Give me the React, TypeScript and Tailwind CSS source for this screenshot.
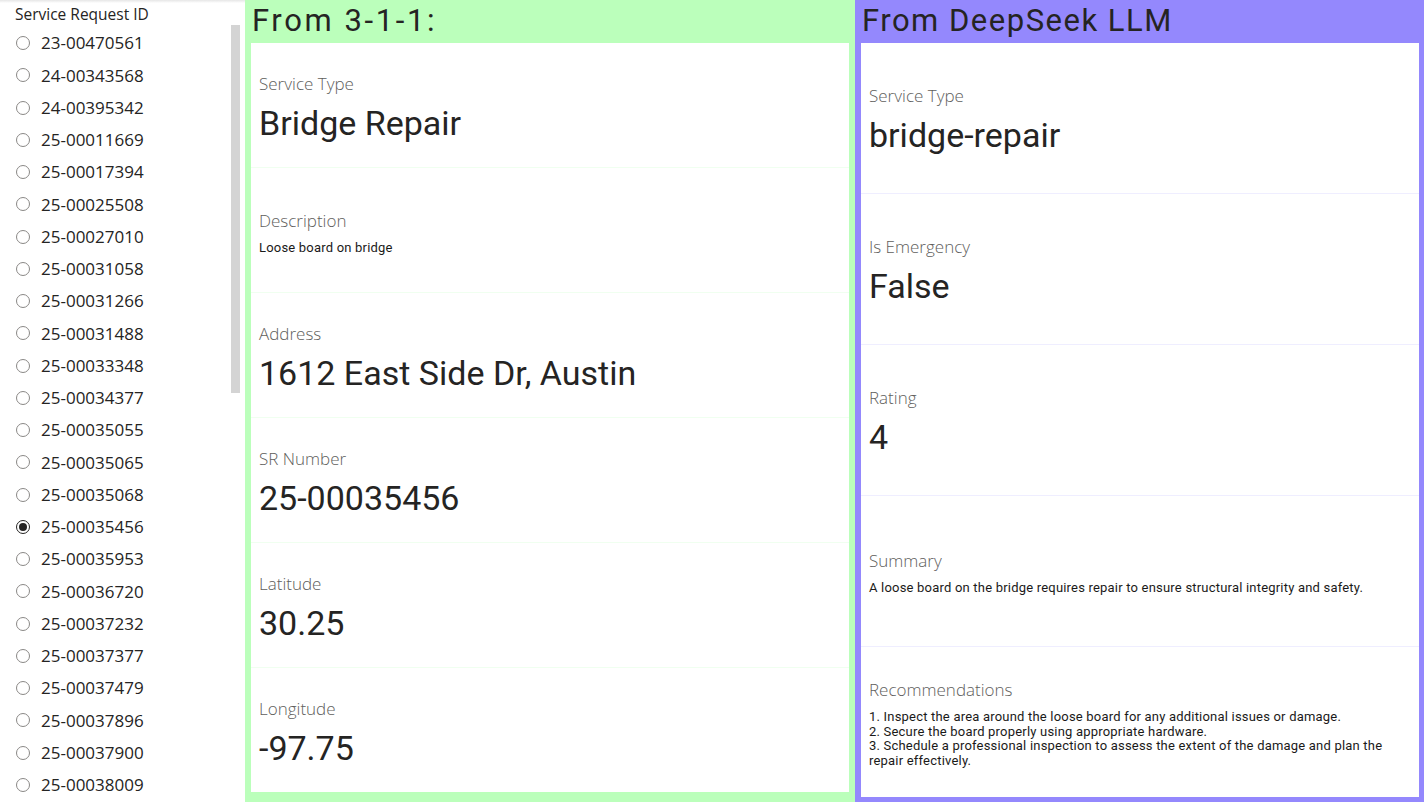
import React from 'react';

const ids = [
  '23-00470561', '24-00343568', '24-00395342', '25-00011669', '25-00017394', '25-00025508',
  '25-00027010', '25-00031058', '25-00031266', '25-00031488', '25-00033348', '25-00034377',
  '25-00035055', '25-00035065', '25-00035068', '25-00035456', '25-00035953', '25-00036720',
  '25-00037232', '25-00037377', '25-00037479', '25-00037896', '25-00037900', '25-00038009',
];

const selectedId = '25-00035456';

const din = { fontFamily: 'Roboto, "DejaVu Sans", sans-serif' };
const segoe = { fontFamily: '"Open Sans", "Noto Sans", sans-serif' };

// 라디오 버튼 하나
const Radio = ({ checked }: { checked: boolean }) => (
  <span
    className={`flex h-[14px] w-[14px] shrink-0 items-center justify-center rounded-full border ${
      checked ? 'border-[#252423]' : 'border-[#8a8886]'
    } bg-white`}
  >
    {checked && <span className="h-[8px] w-[8px] rounded-full bg-[#252423]" />}
  </span>
);

const Slicer = () => (
  <div className="relative h-full w-[245px] shrink-0 overflow-hidden bg-white">
    <div className="h-[3px] bg-gradient-to-b from-[#e6e6e6] to-white" />
    <div className="pl-[15px] pt-[2px] text-[15.5px] leading-[18px] text-[#252423]" style={segoe}>
      Service Request ID
    </div>
    <ul className="mt-[4px]">
      {ids.map((id) => (
        <li key={id} className="flex h-[32.26px] items-center pl-[16px]">
          <Radio checked={id === selectedId} />
          <span className="ml-[11px] text-[17px] text-[#252423]" style={segoe}>
            {id}
          </span>
        </li>
      ))}
    </ul>
    {/* 스크롤바 */}
    <div className="absolute left-[231px] top-[25px] h-[368px] w-[9px] bg-[#d4d4d4]" />
  </div>
);

interface FieldProps {
  label: string;
  value: string;
  small?: boolean;
  last?: boolean;
  line: string;
  tight?: boolean;
}

const Field = ({ label, value, small, last, line, tight }: FieldProps) => (
  <div
    className={`flex flex-1 flex-col justify-center px-[8px] ${tight ? 'pt-[3px]' : 'pt-[6px]'} ${
      last ? '' : `border-b ${line}`
    }`}
  >
    <div className="text-[17px] font-light leading-[21px] text-[#605e5c]" style={segoe}>
      {label}
    </div>
    {small ? (
      <div
        className="mt-[10px] whitespace-pre-line text-[13px] leading-[14.5px] tracking-[0.2px] text-[#1b1a19]"
        style={din}
      >
        {value}
      </div>
    ) : (
      <div className="mt-[9px] text-[34px] leading-[40px] text-[#252423]" style={din}>
        {value}
      </div>
    )}
  </div>
);

export default function App() {
  return (
    <div className="flex h-[802px] w-[1424px] overflow-hidden bg-white">
      <Slicer />

      {/* 3-1-1 원본 데이터 */}
      <div className="flex h-full w-[610px] shrink-0 flex-col bg-[#bbffbb] px-[6px] pb-[10px]">
        <div
          className="h-[43px] pl-[1px] pt-[1px] text-[31px] leading-[40px] tracking-[2.6px] text-[#252423]"
          style={din}
        >
          From 3-1-1:
        </div>
        <div className="flex flex-1 flex-col bg-white">
          <Field label="Service Type" value="Bridge Repair" line="border-[#f0fff0]" />
          <Field label="Description" value="Loose board on bridge" small line="border-[#f0fff0]" />
          <Field label="Address" value="1612 East Side Dr, Austin" line="border-[#f0fff0]" />
          <Field label="SR Number" value="25-00035456" line="border-[#f0fff0]" />
          <Field label="Latitude" value="30.25" line="border-[#f0fff0]" />
          <Field label="Longitude" value="-97.75" last line="border-[#f0fff0]" />
        </div>
      </div>

      {/* DeepSeek LLM 분석 결과 */}
      <div className="flex h-full flex-1 flex-col bg-[#9488fd] pb-[5px] pl-[6px] pr-[5px]">
        <div
          className="h-[43px] pl-[1px] pt-[1px] text-[31px] leading-[40px] tracking-[1.5px] text-[#252423]"
          style={din}
        >
          From DeepSeek LLM
        </div>
        <div className="flex flex-1 flex-col bg-white">
          <Field label="Service Type" value="bridge-repair" tight line="border-[#efeeff]" />
          <Field label="Is Emergency" value="False" tight line="border-[#efeeff]" />
          <Field label="Rating" value="4" tight line="border-[#efeeff]" />
          <Field
            label="Summary"
            value="A loose board on the bridge requires repair to ensure structural integrity and safety."
            small
            tight
            line="border-[#efeeff]"
          />
          <Field
            label="Recommendations"
            value={
              '1. Inspect the area around the loose board for any additional issues or damage.\n2. Secure the board properly using appropriate hardware.\n3. Schedule a professional inspection to assess the extent of the damage and plan the repair effectively.'
            }
            small
            last
            tight
            line="border-[#efeeff]"
          />
        </div>
      </div>
    </div>
  );
}
